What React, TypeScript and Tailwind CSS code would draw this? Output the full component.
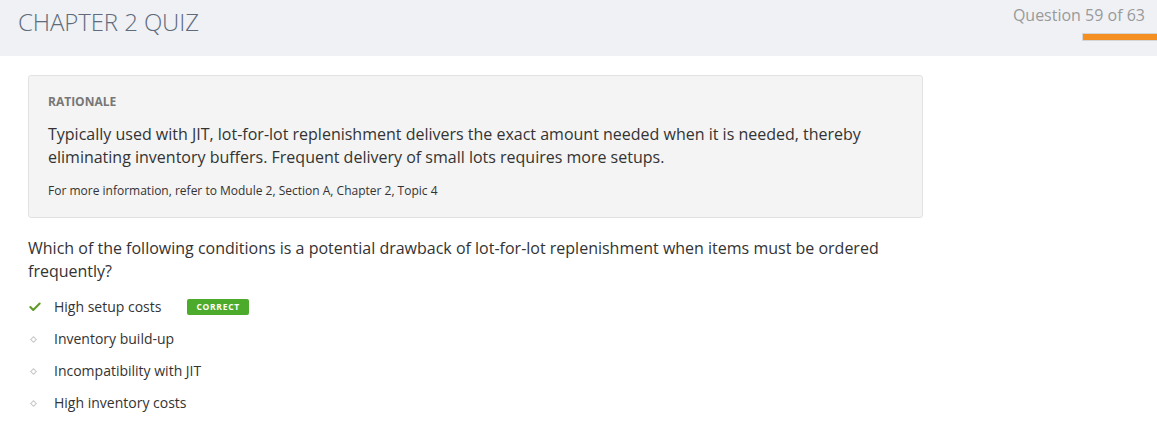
import { Check } from "lucide-react";

const options = [
  { text: "High setup costs", correct: true },
  { text: "Inventory build-up", correct: false },
  { text: "Incompatibility with JIT", correct: false },
  { text: "High inventory costs", correct: false },
];

export default function App() {
  return (
    <div className="min-h-screen bg-white text-[#333] font-['Open_Sans',sans-serif]">
      <header className="h-14 bg-[#eff1f5] flex justify-between">
        <h1 className="pl-[18px] pt-[6px] text-[24px] leading-[32px] font-light text-[#5f6b7b] tracking-[-0.1px]">
          CHAPTER 2 QUIZ
        </h1>
        <div className="flex flex-col items-end">
          <div className="pt-[4px] pr-[12px] text-[16px] leading-[22px] text-[#9a9a9a]">
            Question 59 of 63
          </div>
          <div className="mt-[7px] w-[75px] h-[8px] bg-[#f39021] border border-[#d5d5d5] border-r-0" />
        </div>
      </header>

      <main className="pl-[28px] pt-[19px] w-[923px]">
        <section className="rounded-[3px] border border-[#e2e2e2] bg-[#f4f4f4] pl-[19px] pr-[20px] pt-[18px] pb-[18px]">
          <h3 className="text-[12px] leading-[16px] font-bold text-[#777]">RATIONALE</h3>
          <p className="mt-[13px] text-[16px] leading-[23px] text-[#333]">
            Typically used with JIT, lot-for-lot replenishment delivers the exact amount needed when it is needed, thereby
            eliminating inventory buffers. Frequent delivery of small lots requires more setups.
          </p>
          <p className="mt-[13px] text-[12px] leading-[17px] text-[#333]">
            For more information, refer to Module 2, Section A, Chapter 2, Topic 4
          </p>
        </section>

        <p className="mt-[19px] text-[16px] leading-[23px] text-[#333]">
          Which of the following conditions is a potential drawback of lot-for-lot replenishment when items must be ordered
          frequently?
        </p>

        <ul className="mt-[14px] flex flex-col gap-[12px]">
          {options.map((o) => (
            <li key={o.text} className="flex items-center h-[20px] text-[14px] leading-[20px] text-[#333]">
              <span className="w-[26px] flex items-center">
                {o.correct ? (
                  <Check className="w-[14px] h-[14px] text-[#5f9a26]" strokeWidth={3.5} />
                ) : (
                  <span className="ml-[3px] w-[5px] h-[5px] rotate-45 border border-[#c8c8c8]" />
                )}
              </span>
              <span>{o.text}</span>
              {o.correct && (
                <span className="ml-[26px] h-[16px] px-[9px] rounded-[2px] bg-[#4cab2b] text-white text-[8.5px] font-bold leading-[16px] tracking-[0.7px]">
                  CORRECT
                </span>
              )}
            </li>
          ))}
        </ul>
      </main>
    </div>
  );
}
